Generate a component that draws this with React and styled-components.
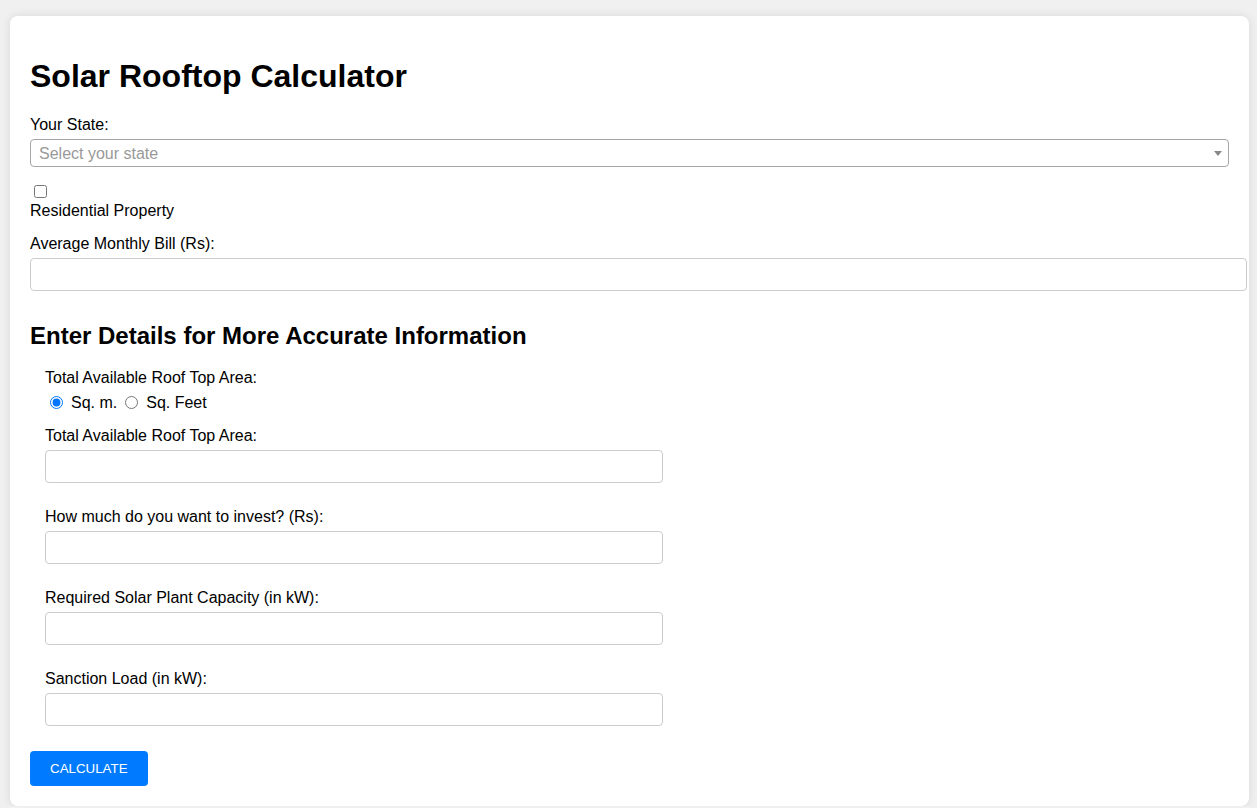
import React, { useState } from 'react';
import styled, { createGlobalStyle } from 'styled-components';

const GlobalStyle = createGlobalStyle`
  body {
    margin: 0;
    background-color: #f0f0f0;
    font-family: "Liberation Sans", Arial, sans-serif;
    color: #000;
  }
`;

export const Page = styled.div`
  padding: 16px 8px 0 10px;
`;

export const Card = styled.div`
  background-color: #fff;
  border-radius: 8px;
  box-shadow: 0 0 10px rgba(0, 0, 0, 0.1);
  padding: 0 20px 20px;
  display: flow-root;
`;

export const Title = styled.h1`
  font-size: 32px;
  font-weight: bold;
  margin: 21.5px 0;
  padding-top: 20px;
  line-height: normal;
`;

export const SubTitle = styled.h2`
  font-size: 24px;
  font-weight: bold;
  margin: 31px 0 18.5px;
  line-height: normal;
`;

export const Group = styled.div`
  margin-bottom: ${props => (props.wide ? '25px' : '15px')};
`;

export const Label = styled.label`
  display: block;
  font-size: 16px;
  line-height: normal;
  margin-bottom: ${props => (props.tight ? '0' : '5px')};
`;

export const SelectBox = styled.div`
  display: flex;
  box-sizing: border-box;
  width: 100%;
  height: 28px;
  align-items: center;
  justify-content: space-between;
  padding: 1px 6px 0 8px;
  border: 1px solid #a6a6a6;
  border-radius: 4px;
  font-size: 16px;
  color: #999;
  cursor: pointer;
`;

export const CheckRow = styled.div`
  display: flex;
  padding: 3px 0 4px 4px;
`;

export const Check = styled.input`
  width: 13px;
  height: 13px;
  margin: 0;
`;

export const RadioRow = styled.div`
  display: flex;
  align-items: center;
  font-size: 16px;
  height: 18px;
  margin-top: 7px;
`;

export const Radio = styled.input`
  width: 13px;
  height: 13px;
  margin: 0 3px 0 5px;
`;

export const RadioText = styled.span`
  margin: 0 3px 0 5px;
`;

export const TextInput = styled.input`
  display: block;
  box-sizing: content-box;
  width: ${props => (props.fixed ? '600px' : '100%')};
  height: 15px;
  padding: 8px;
  border: 1px solid #ccc;
  border-radius: 4px;
  font-size: 13.33px;
  font-family: "Liberation Sans", Arial, sans-serif;
  outline: none;
`;

export const Details = styled.div`
  padding-left: 15px;
`;

export const Button = styled.button`
  display: block;
  margin-top: 1px;
  padding: 10px 20px;
  background-color: #007bff;
  color: #fff;
  border: none;
  border-radius: 4px;
  font-family: "Liberation Sans", Arial, sans-serif;
  font-size: 13.33px;
  line-height: 15px;
  text-transform: uppercase;
  cursor: pointer;
`;

const Caret = () => (
  <svg width="8" height="5" viewBox="0 0 8 5">
    <path d="M0 0 L8 0 L4 5 Z" fill="#888" />
  </svg>
);

const detailFields = [
  'Total Available Roof Top Area:',
  'How much do you want to invest? (Rs):',
  'Required Solar Plant Capacity (in kW):',
  'Sanction Load (in kW):',
];

export default function App() {
  const [unit, setUnit] = useState('sqm');

  return (
    <>
      <GlobalStyle />
      <Page>
        <Card>
          <Title>Solar Rooftop Calculator</Title>

          <Group>
            <Label>Your State:</Label>
            <SelectBox>
              <span>Select your state</span>
              <Caret />
            </SelectBox>
          </Group>

          <Group>
            <CheckRow>
              <Check type="checkbox" id="residential" />
            </CheckRow>
            <Label htmlFor="residential" tight>Residential Property</Label>
          </Group>

          <Group>
            <Label>Average Monthly Bill (Rs):</Label>
            <TextInput type="text" />
          </Group>

          <SubTitle>Enter Details for More Accurate Information</SubTitle>

          <Details>
            <Group>
              <Label tight>Total Available Roof Top Area:</Label>
              <RadioRow>
                <Radio type="radio" name="unit" checked={unit === 'sqm'} onChange={() => setUnit('sqm')} />
                <RadioText>Sq. m.</RadioText>
                <Radio type="radio" name="unit" checked={unit === 'sqft'} onChange={() => setUnit('sqft')} />
                <RadioText>Sq. Feet</RadioText>
              </RadioRow>
            </Group>

            {detailFields.map((item, index) => (
              <Group wide key={index}>
                <Label>{item}</Label>
                <TextInput type="text" fixed />
              </Group>
            ))}
          </Details>

          <Button>Calculate</Button>
        </Card>
      </Page>
    </>
  );
}
